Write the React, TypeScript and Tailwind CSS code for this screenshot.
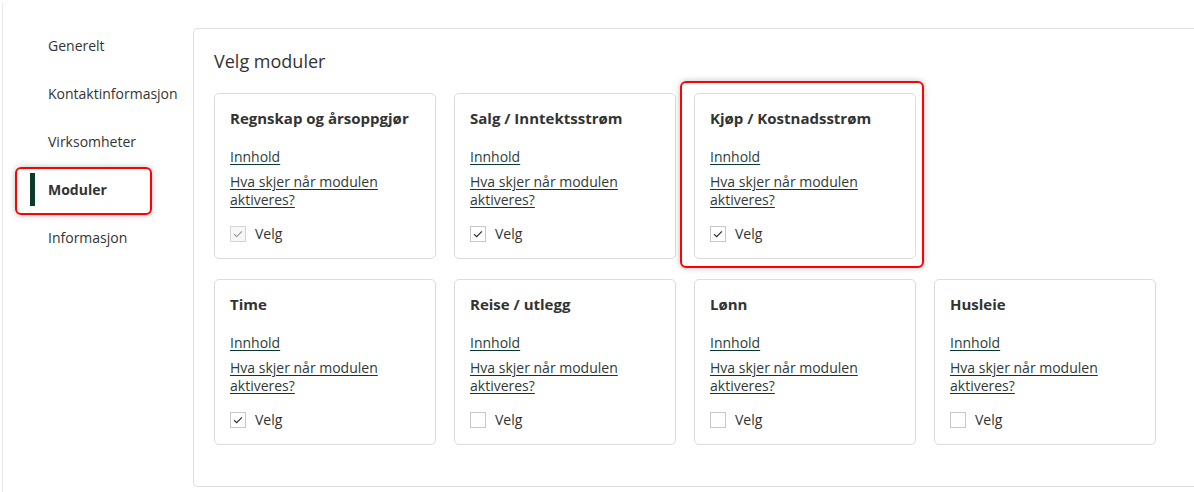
import React from 'react';

type Module = {
  title: string;
  state: 'disabled' | 'checked' | 'empty';
  highlight?: boolean;
};

const rowOne: Module[] = [
  { title: 'Regnskap og årsoppgjør', state: 'disabled' },
  { title: 'Salg / Inntektsstrøm', state: 'checked' },
  { title: 'Kjøp / Kostnadsstrøm', state: 'checked', highlight: true },
];

const rowTwo: Module[] = [
  { title: 'Time', state: 'checked' },
  { title: 'Reise / utlegg', state: 'empty' },
  { title: 'Lønn', state: 'empty' },
  { title: 'Husleie', state: 'empty' },
];

const navItems = ['Generelt', 'Kontaktinformasjon', 'Virksomheter', 'Moduler', 'Informasjon'];

function Checkbox({ state }: { state: Module['state'] }) {
  const box =
    state === 'disabled'
      ? 'border-[#d4d4d4] bg-[#f7f7f7]'
      : 'border-[#c8c8c8] bg-white';
  return (
    <span className={`flex h-4 w-4 items-center justify-center border ${box}`}>
      {state !== 'empty' && (
        <svg viewBox="0 0 16 16" className="h-4 w-4" fill="none">
          <polyline
            points="3.5,8.2 6.5,11 12.5,5"
            stroke={state === 'disabled' ? '#9a9a9a' : '#1f2a27'}
            strokeWidth="1.3"
          />
        </svg>
      )}
    </span>
  );
}

function ModuleCard({ mod }: { mod: Module }) {
  return (
    <div className="relative">
      {mod.highlight && (
        <div className="pointer-events-none absolute -left-[14px] -top-[12px] -right-[8px] -bottom-[9px] rounded-[6px] border-2 border-[#f00] shadow-[0_0_6px_rgba(0,0,0,0.25)]" />
      )}
      <div className="relative flex h-[166px] w-[222px] flex-col rounded-[5px] border border-[#dcdcdc] bg-white px-[15px] pt-[13px]">
        <h3 className="text-[15px] font-bold leading-[22px] text-[#333]">{mod.title}</h3>
        <a className="mt-[18px] self-start text-[14px] leading-[20px] text-[#2f3b38] underline decoration-[#0b3b2c] underline-offset-2">
          Innhold
        </a>
        <a className="mt-[6px] text-[14px] leading-[18px] text-[#2f3b38] underline decoration-[#0b3b2c] underline-offset-2">
          Hva skjer når modulen
          <br />
          aktiveres?
        </a>
        <label className="mt-[15px] flex items-center gap-[9px] text-[14px] leading-[20px] text-[#333]">
          <Checkbox state={mod.state} />
          Velg
        </label>
      </div>
    </div>
  );
}

export default function App() {
  return (
    <div className="min-h-[492px] bg-white font-['Open_Sans','Noto_Sans',sans-serif]">
      <div className="ml-[2px] mt-[2px] flex min-h-[490px] rounded-tl-[4px] border-l border-[#e6e6e6]">
        {/* Sidebar */}
        <nav className="w-[190px] shrink-0 pt-[19px]">
          {navItems.map((item) => {
            const active = item === 'Moduler';
            return (
              <div key={item} className="relative flex h-[48px] items-center pl-[45px]">
                {active && (
                  <>
                    <div className="pointer-events-none absolute left-[12px] top-[2px] h-[48px] w-[137px] rounded-[6px] border-2 border-[#f00] shadow-[0_0_6px_rgba(0,0,0,0.25)]" />
                    <span className="absolute left-[27px] top-[8px] h-[33px] w-[5px] bg-[#0e3a2d]" />
                  </>
                )}
                <span className={`text-[14px] text-[#333] ${active ? 'font-bold' : ''}`}>{item}</span>
              </div>
            );
          })}
        </nav>

        {/* Main panel */}
        <div className="mb-[5px] mt-[26px] flex-1 rounded-l-[5px] border-y border-l border-[#dedede] pl-[20px] pt-[19px]">
          <h2 className="text-[18px] leading-[26px] text-[#333]">Velg moduler</h2>
          <div className="mt-[19px] flex gap-[18px]">
            {rowOne.map((m) => (
              <ModuleCard key={m.title} mod={m} />
            ))}
          </div>
          <div className="mt-[20px] flex gap-[18px]">
            {rowTwo.map((m) => (
              <ModuleCard key={m.title} mod={m} />
            ))}
          </div>
        </div>
      </div>
    </div>
  );
}
